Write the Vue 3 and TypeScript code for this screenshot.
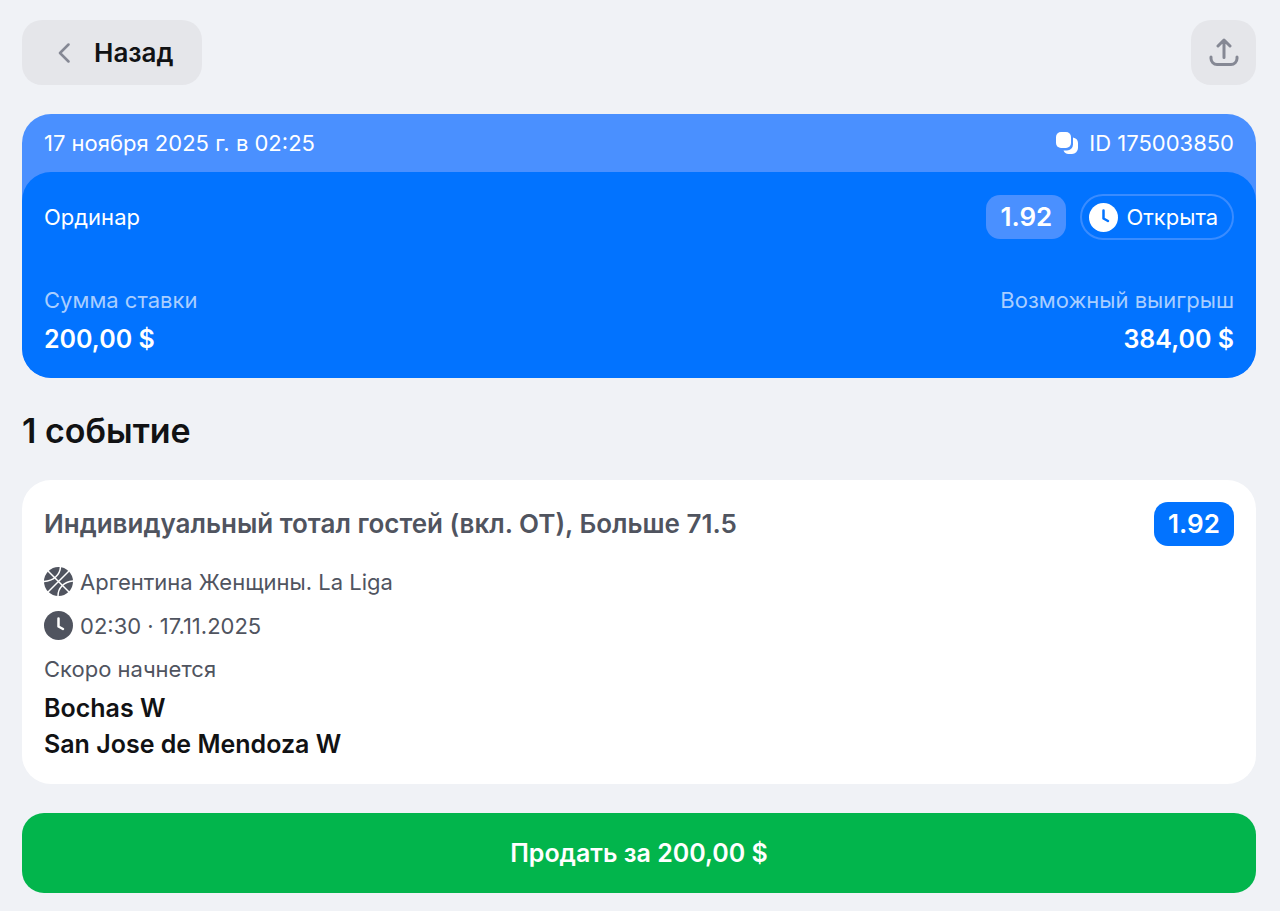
<script setup lang="ts">
interface Bet {
  date: string
  id: string
  type: string
  odds: string
  status: string
  stake: string
  payout: string
}

interface BetEvent {
  market: string
  odds: string
  league: string
  time: string
  state: string
  teams: string[]
}

const bet: Bet = {
  date: '17 ноября 2025 г. в 02:25',
  id: '175003850',
  type: 'Ординар',
  odds: '1.92',
  status: 'Открыта',
  stake: '200,00 $',
  payout: '384,00 $',
}

const events: BetEvent[] = [
  {
    market: 'Индивидуальный тотал гостей (вкл. ОТ), Больше 71.5',
    odds: '1.92',
    league: 'Аргентина Женщины. La Liga',
    time: '02:30 · 17.11.2025',
    state: 'Скоро начнется',
    teams: ['Bochas W', 'San Jose de Mendoza W'],
  },
]
</script>

<template>
  <main class="page">
    <header class="toolbar">
      <button class="tool back" type="button">
        <svg class="chevron" viewBox="0 0 12 20" aria-hidden="true">
          <path d="M10.5 1.5 2 10l8.5 8.5" />
        </svg>
        <span>Назад</span>
      </button>
      <button class="tool share" type="button" aria-label="Поделиться">
        <svg class="upload" viewBox="0 0 30 30" aria-hidden="true">
          <path d="M15 19.5V2M9 8l6-6 6 6M2 19v1.500a6 6 0 0 0 6 6h14a6 6 0 0 0 6-6V19" />
        </svg>
      </button>
    </header>

    <section class="ticket">
      <div class="strip">
        <time datetime="2025-11-17T02:25">{{ bet.date }}</time>
        <button class="copy" type="button">
          <svg class="copy-icon" viewBox="0 0 22 22" aria-hidden="true">
            <rect x="0" y="0" width="15" height="16" rx="5" />
            <path d="M17 5.500C20 6 22 8 22 11V16a6 6 0 0 1-6 6h-3.500C10 22 8.300 20.800 7.500 18.500H11a6 6 0 0 0 6-6z" />
          </svg>
          <span>ID {{ bet.id }}</span>
        </button>
      </div>
      <div class="body">
        <div class="row">
          <span>{{ bet.type }}</span>
          <div class="badges">
            <span class="odds soft">{{ bet.odds }}</span>
            <span class="status">
              <svg class="round-icon" viewBox="0 0 29 29" aria-hidden="true">
                <circle cx="14.5" cy="14.5" r="14.5" fill="#fff" />
                <path class="hands on-white" d="M14.500 7.500V15.500L19 18" />
              </svg>
              {{ bet.status }}
            </span>
          </div>
        </div>
        <dl class="sums">
          <div>
            <dt>Сумма ставки</dt>
            <dd>{{ bet.stake }}</dd>
          </div>
          <div class="end">
            <dt>Возможный выигрыш</dt>
            <dd>{{ bet.payout }}</dd>
          </div>
        </dl>
      </div>
    </section>

    <h1 class="heading">{{ events.length }} событие</h1>

    <article v-for="event in events" :key="event.market" class="event">
      <div class="row event-head">
        <h2>{{ event.market }}</h2>
        <span class="odds">{{ event.odds }}</span>
      </div>
      <p class="meta">
        <svg class="round-icon" viewBox="0 0 29 29" aria-hidden="true">
          <circle cx="14.5" cy="14.5" r="14.5" fill="#50545f" />
          <path
            class="seams"
            d="M4 4l21 21M25 4L4 25M16.500 0C16 8 9.500 14 0 14.500M29 14C20 15 14 20.500 14 29"
          />
        </svg>
        <span>{{ event.league }}</span>
      </p>
      <p class="meta">
        <svg class="round-icon" viewBox="0 0 29 29" aria-hidden="true">
          <circle cx="14.5" cy="14.5" r="14.5" fill="#50545f" />
          <path class="hands" d="M14.500 7.500V15.500L19 18" />
        </svg>
        <span>{{ event.time }}</span>
      </p>
      <p class="state">{{ event.state }}</p>
      <p v-for="team in event.teams" :key="team" class="team">{{ team }}</p>
    </article>

    <button class="sell" type="button">Продать за {{ bet.stake }}</button>
  </main>
</template>

<style>
body {
  margin: 0;
  background: #f0f2f6;
}
</style>

<style scoped>
.page {
  padding: 20px 24px 18px 22px;
  font-family: Inter, "Noto Sans", sans-serif;
  font-size: 22px;
  line-height: 28px;
  color: #111214;
}

button {
  border: 0;
  margin: 0;
  padding: 0;
  font: inherit;
  color: inherit;
  cursor: pointer;
}

h1,
h2,
p,
dl,
dd {
  margin: 0;
}

svg {
  flex: none;
  fill: none;
  stroke-linecap: round;
  stroke-linejoin: round;
}

.toolbar,
.strip,
.row,
.sums {
  display: flex;
  align-items: center;
  justify-content: space-between;
}

.tool {
  display: flex;
  align-items: center;
  height: 65px;
  border-radius: 20px;
  background: #e5e6ea;
}

.back {
  gap: 24px;
  padding: 0 28px 0 36px;
  font-size: 26px;
  font-weight: 600;
}

.chevron {
  width: 12px;
  height: 20px;
  stroke: #858894;
  stroke-width: 2.5;
}

.share {
  justify-content: center;
  width: 65px;
}

.upload {
  width: 30px;
  height: 30px;
  stroke: #858894;
  stroke-width: 3;
}

.ticket {
  margin-top: 29px;
  border-radius: 29px;
  overflow: hidden;
  background: #4a90ff;
  color: #fff;
}

.strip {
  height: 58px;
  padding: 0 22px;
}

.copy {
  display: flex;
  align-items: center;
  gap: 11px;
  background: none;
}

.copy-icon {
  width: 22px;
  height: 22px;
  fill: #fff;
}

.body {
  padding: 22px 22px 21px;
  border-radius: 29px;
  background: #0273ff;
}

.badges {
  display: flex;
  align-items: center;
  gap: 14px;
}

.odds {
  box-sizing: border-box;
  min-width: 80px;
  padding: 4px 14px;
  border-radius: 14px;
  background: #0273ff;
  color: #fff;
  font-size: 26px;
  font-weight: 600;
  line-height: 36px;
  text-align: center;
}

.soft {
  background: #4a90ff;
}

.status {
  display: flex;
  align-items: center;
  gap: 8px;
  box-sizing: border-box;
  height: 46px;
  padding: 0 14px 0 7px;
  border: 2px solid #3a8cff;
  border-radius: 23px;
}

.round-icon {
  width: 29px;
  height: 29px;
}

.hands {
  stroke: #fff;
  stroke-width: 2.5;
}

.on-white {
  stroke: #0273ff;
}

.seams {
  stroke: #fff;
  stroke-width: 1.5;
}

.sums {
  margin-top: 46px;
}

.end {
  text-align: right;
}

dt {
  color: #a9ceff;
}

dd {
  margin-top: 7px;
  font-size: 25px;
  font-weight: 600;
  line-height: 36px;
}

.heading {
  margin: 31px 0 27px;
  font-size: 34px;
  font-weight: 600;
  line-height: 44px;
}

.event {
  padding: 22px;
  border-radius: 29px;
  background: #fff;
  color: #50545f;
}

.event-head {
  margin-bottom: 21px;
}

h2 {
  font-size: 26px;
  font-weight: 600;
  line-height: 36px;
}

.meta {
  display: flex;
  align-items: center;
  gap: 7px;
  margin-bottom: 15px;
}

.state {
  margin-bottom: 7px;
}

.team {
  color: #111214;
  font-size: 25px;
  font-weight: 600;
  line-height: 36px;
}

.sell {
  display: block;
  width: 100%;
  height: 80px;
  margin-top: 29px;
  border-radius: 22px;
  background: #02b54c;
  color: #fff;
  font-size: 25px;
  font-weight: 600;
}
</style>
